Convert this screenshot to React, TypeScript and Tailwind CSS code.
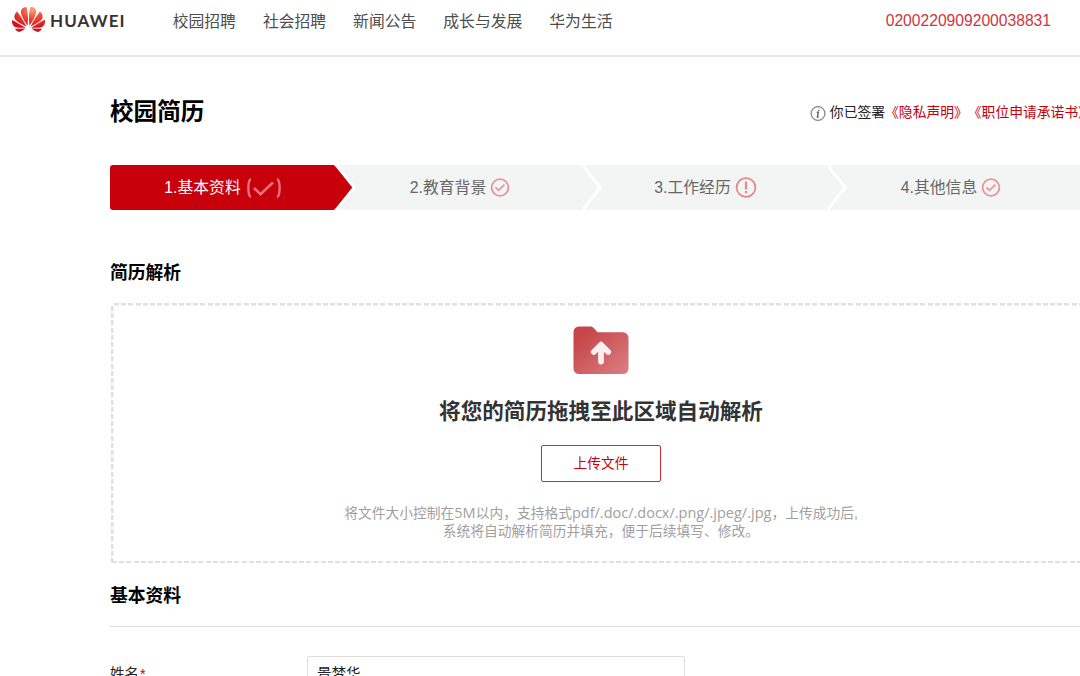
import type { ReactNode } from "react";
import { SiHuawei } from "react-icons/si";

const NAV = ["校园招聘", "社会招聘", "新闻公告", "成长与发展", "华为生活"];

function Logo() {
  return (
    <a href="#" className="flex items-center">
      <svg width="0" height="0" className="absolute">
        <defs>
          <radialGradient id="petal" cx="0.62" cy="0.12" r="0.75">
            <stop offset="0" stopColor="#f9a27c" />
            <stop offset="0.45" stopColor="#ee4a36" />
            <stop offset="1" stopColor="#d8101c" />
          </radialGradient>
        </defs>
      </svg>
      <SiHuawei className="size-[33px] fill-[url(#petal)]" />
      <span className="mt-0.5 ml-[5px] font-['Lato'] text-[17px] leading-none font-bold tracking-[1.1px] text-[#3a322f]">
        HUAWEI
      </span>
    </a>
  );
}

function Header() {
  return (
    <header className="flex h-[57px] items-start border-b-2 border-[#e8e8e8] pr-[29px] pl-3">
      <div className="flex h-[38px] items-center">
        <Logo />
      </div>
      <nav className="ml-[47px] flex h-11 items-center gap-[27px] text-[15.8px] text-[#4d4d4d]">
        {NAV.map((item) => (
          <a key={item} href="#">
            {item}
          </a>
        ))}
      </nav>
      <span className="ml-auto flex h-[42px] items-center font-['Liberation_Sans'] text-[15.65px] text-[#cf3540]">
        0200220909200038831
      </span>
    </header>
  );
}

function InfoIcon() {
  return (
    <svg viewBox="0 0 16 16" className="size-4" fill="none">
      <circle cx="8" cy="7.500" r="6.900" stroke="#888" strokeWidth="1.300" />
      <path d="M8.900 3.700l-.2 1" stroke="#666" strokeWidth="1.800" />
      <path d="M6.700 6.300h1.600l-.9 4.600h1.400" stroke="#666" strokeWidth="1.500" />
    </svg>
  );
}

function DoneIcon() {
  return (
    <svg viewBox="0 0 20 20" className="size-5" fill="none" stroke="#e8949a">
      <circle cx="10" cy="9.500" r="8.400" strokeWidth="1.800" />
      <path d="M5.500 9.300l3 3 6-5.600" strokeWidth="1.700" />
    </svg>
  );
}

function WarnIcon() {
  return (
    <svg viewBox="0 0 22 22" className="size-[22px]" fill="none" stroke="#e5868d">
      <circle cx="11" cy="10.500" r="9.400" strokeWidth="1.800" />
      <path d="M11 4.500v8M11 14v2.200" strokeWidth="2.200" />
    </svg>
  );
}

function CurrentIcon() {
  return (
    <svg viewBox="0 0 38 20" className="h-5 w-[38px]" fill="none" stroke="#e5737b">
      <path d="M6 1C2.500 2 2.500 18 6 19M32 1c3.500 1 3.500 17 0 18" strokeWidth="2.400" />
      <path d="M9 10l6.500 6.200L28 4.500" strokeWidth="2.600" />
    </svg>
  );
}

function Chevron() {
  return (
    <svg viewBox="0 0 22 45" className="absolute top-0 left-0 h-[45px] w-[22px]" fill="none">
      <path d="M-1.500-1L17.200 22.500-1.500 46" stroke="#fff" strokeWidth="3" />
    </svg>
  );
}

function Step({ label, icon, width }: { label: string; icon: ReactNode; width: string }) {
  return (
    <li className={`relative flex shrink-0 items-center justify-center gap-1 ${width}`}>
      <Chevron />
      {label}
      {icon}
    </li>
  );
}

function Steps() {
  return (
    <ol className="mt-[35px] flex h-[45px] bg-[#f3f5f5] text-[15.8px] text-[#666]">
      <li className="relative flex w-[227px] shrink-0 items-center justify-center gap-1 text-white">
        <span className="absolute inset-y-0 left-0 w-[246px] bg-white [clip-path:polygon(0_0,227px_0,246px_50%,227px_100%,0_100%)]" />
        <span className="absolute inset-y-0 left-0 w-[244px] rounded-l-[3px] bg-[#c7000b] [clip-path:polygon(0_0,224px_0,244px_50%,224px_100%,0_100%)]" />
        <span className="relative">1.基本资料</span>
        <span className="relative">
          <CurrentIcon />
        </span>
      </li>
      <Step label="2.教育背景" icon={<DoneIcon />} width="w-[246px]" />
      <Step label="3.工作经历" icon={<WarnIcon />} width="w-[245px]" />
      <Step label="4.其他信息" icon={<DoneIcon />} width="w-[246px]" />
    </ol>
  );
}

function FolderIcon() {
  return (
    <svg viewBox="0 0 56 48" className="h-12 w-14">
      <defs>
        <linearGradient id="folder" x1="0" y1="0" x2="1" y2="1">
          <stop offset="0.15" stopColor="#c64548" />
          <stop offset="1" stopColor="#da8084" />
        </linearGradient>
      </defs>
      <path
        d="M6 .5h11.500c1.500 0 2.300.6 3.200 1.600L24.500 6.300H50a5.500 5.500 0 0 1 5.500 5.500v30.700A5.500 5.500 0 0 1 50 48H6a5.500 5.500 0 0 1-5.500-5.500V6A5.500 5.500 0 0 1 6 .5z"
        fill="url(#folder)"
      />
      <path
        d="M28 19v16.500M20.800 26L28 18.700l7.200 7.300"
        fill="none"
        stroke="#faf0f0"
        strokeWidth="5.800"
        strokeLinecap="round"
        strokeLinejoin="round"
      />
    </svg>
  );
}

function UploadArea() {
  return (
    <div className="mt-[17px] flex h-[260px] w-[982px] flex-col items-center bg-[image:repeating-linear-gradient(90deg,#e0e0e0_0_5px,transparent_5px_7.2px),repeating-linear-gradient(90deg,#e0e0e0_0_5px,transparent_5px_7.2px),repeating-linear-gradient(180deg,#e0e0e0_0_5px,transparent_5px_7.2px)] bg-[length:100%_2.5px,100%_2.5px,2.5px_100%] bg-[position:4px_0,2px_100%,0.5px_3px] bg-no-repeat pt-[23px]">
      <FolderIcon />
      <h3 className="mt-[22px] text-[21.6px] leading-8 font-bold text-[#333]">将您的简历拖拽至此区域自动解析</h3>
      <button className="mt-[17px] h-[37px] w-[120px] rounded-[2px] border border-[#cf2a35] pt-0.5 text-[13.7px] text-[#c7000b]">
        上传文件
      </button>
      <p className="mt-[22px] text-center text-[13.75px] leading-[18px] whitespace-nowrap text-[#a0a0a0]">
        将文件大小控制在<span className="font-['Open_Sans'] text-[14.5px]">5M</span>以内，支持格式
        <span className="font-['Open_Sans'] text-[14.5px]">pdf/.doc/.docx/.png/.jpeg/.jpg</span>，上传成功后,
        <br />
        系统将自动解析简历并填充，便于后续填写、修改。
      </p>
    </div>
  );
}

export default function App() {
  return (
    <div className="h-[676px] w-full overflow-hidden bg-white font-['Liberation_Sans','Noto_Sans_CJK_SC',sans-serif] text-black">
      <Header />
      <main className="pl-[110px]">
        <div className="flex h-[73px] items-end justify-between">
          <h1 className="text-[23.6px] leading-9 font-bold">校园简历</h1>
          <p className="mr-[-12px] flex h-[33px] shrink-0 items-center text-[13.8px] whitespace-nowrap text-[#222]">
            <InfoIcon />
            <span className="ml-1">你已签署</span>
            <a href="#" className="text-[#c7000b]">
              《隐私声明》
            </a>
            <a href="#" className="text-[#c7000b]">
              《职位申请承诺书》
            </a>
          </p>
        </div>
        <Steps />
        <h2 className="mt-[50px] text-[17.8px] leading-[26px] font-bold">简历解析</h2>
        <UploadArea />
        <h2 className="mt-[20px] text-[17.8px] leading-[26px] font-bold">基本资料</h2>
        <div className="mt-[17px] border-t border-[#ddd]" />
        <div className="mt-[29px] flex text-[14.5px] text-[#222]">
          <label className="flex h-[38px] w-[197px] items-center">
            姓名<span className="ml-px text-[#c7000b]">*</span>
          </label>
          <div className="flex h-[38px] w-[378px] items-center rounded-[2px] border border-[#ddd] px-[9px]">景梦华</div>
        </div>
      </main>
    </div>
  );
}
